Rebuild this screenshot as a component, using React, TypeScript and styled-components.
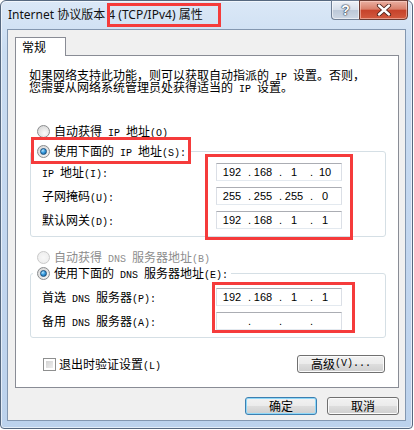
import React from 'react';
import styled, { createGlobalStyle } from 'styled-components';

const GlobalStyle = createGlobalStyle`
  html, body {
    margin: 0;
    padding: 0;
    background: #fff;
  }
  body {
    font-family: "Noto Sans CJK SC", "Noto Sans", sans-serif;
    font-size: 12px;
    color: #000;
  }
`;

const Window = styled.div`
  position: relative;
  box-sizing: border-box;
  width: 413px;
  height: 429px;
  display: flex;
  flex-direction: column;
  border: 1px solid #56687f;
  border-radius: 6px 6px 4px 4px;
  background: linear-gradient(180deg, #dbe8f7 0%, #c9dcf1 12%, #c2d6ef 60%, #bcd2ec 100%);
  box-shadow: inset 0 0 0 1px rgba(255, 255, 255, 0.6);
`;

const TitleBar = styled.div`
  height: 28px;
  display: flex;
  align-items: flex-start;
  padding-left: 7px;
`;

const Title = styled.div`
  font-family: "Noto Sans", "Noto Sans CJK SC", sans-serif;
  font-size: 12px;
  line-height: 28px;
  color: #111;
`;

const CaptionButtons = styled.div`
  display: flex;
  margin-left: auto;
  margin-right: 4px;
  margin-top: -1px;
`;

const HelpButton = styled.div`
  box-sizing: border-box;
  width: 28px;
  height: 20px;
  display: flex;
  align-items: center;
  justify-content: center;
  border: 1px solid #6f7f95;
  border-right: none;
  border-radius: 0 0 0 4px;
  background: linear-gradient(180deg, #eef2f8 0%, #d7dfea 48%, #bcc8d8 52%, #cdd7e4 100%);
  box-shadow: inset 0 0 0 1px rgba(255, 255, 255, 0.55);
  font-family: "Liberation Sans", sans-serif;
  font-weight: bold;
  font-size: 14px;
  color: #fff;
  text-shadow: 0 0 1px #2f3a48, 0 0 1px #2f3a48, 0 0 2px #2f3a48;
`;

const CloseButton = styled.div`
  box-sizing: border-box;
  width: 49px;
  height: 20px;
  display: flex;
  align-items: center;
  justify-content: center;
  border: 1px solid #6a3b33;
  border-radius: 0 0 4px 0;
  background: linear-gradient(180deg, #eab0a2 0%, #d9806b 45%, #c6432b 52%, #d25a3f 100%);
  box-shadow: inset 0 0 0 1px rgba(255, 220, 210, 0.5);
`;

const Client = styled.div`
  flex: 1;
  margin: 0 6px 7px 6px;
  box-sizing: border-box;
  border: 1px solid #8397b0;
  background: #f0f0f0;
  padding: 7px 6px 0 7px;
  display: flex;
  flex-direction: column;
  line-height: 16px;
`;

const Tab = styled.div`
  position: relative;
  z-index: 1;
  box-sizing: border-box;
  width: 51px;
  height: 19px;
  margin-bottom: -1px;
  padding-left: 6px;
  border: 1px solid #898c95;
  border-bottom: none;
  background: #fff;
  line-height: 18px;
`;

const Panel = styled.div`
  box-sizing: border-box;
  width: 384px;
  height: 333px;
  border: 1px solid #898c95;
  background: #fff;
  display: flex;
  flex-direction: column;
`;

const Description = styled.div`
  margin-top: 13px;
  padding-left: 13px;
  line-height: 12px;
`;

const Latin = styled.span`
  font-family: "Liberation Mono", monospace;
  font-size: 10px;
  line-height: 0;
`;

const RadioRow = styled.div<{ $disabled?: boolean }>`
  height: 16px;
  display: flex;
  align-items: center;
  gap: 4px;
  color: ${(p) => (p.$disabled ? '#8d8d8d' : '#000')};
`;

const StandaloneRadio = styled(RadioRow)<{ $top: number }>`
  margin-top: ${(p) => p.$top}px;
  padding-left: 21px;
`;

const RadioCircle = styled.span<{ $disabled?: boolean }>`
  box-sizing: border-box;
  width: 13px;
  height: 13px;
  border-radius: 50%;
  display: inline-flex;
  align-items: center;
  justify-content: center;
  border: 1px solid ${(p) => (p.$disabled ? '#c9c9c9' : '#8a8c8e')};
  background: ${(p) =>
    p.$disabled
      ? 'radial-gradient(circle at 50% 50%, #f7f7f7 0%, #ececec 100%)'
      : 'radial-gradient(circle at 60% 65%, #fbfbfb 0%, #e3e3e3 55%, #cfcfcf 100%)'};
`;

const RadioDot = styled.span`
  width: 5px;
  height: 5px;
  border-radius: 50%;
  border: 1px solid #1c4f7d;
  background: radial-gradient(circle at 35% 30%, #b6e4ff 0%, #3a9ee0 45%, #0d5a98 100%);
`;

const Group = styled.fieldset<{ $top: number; $padTop: number }>`
  box-sizing: border-box;
  width: 356px;
  margin: ${(p) => p.$top}px 0 0 14px;
  padding: ${(p) => p.$padTop}px 0 4px 0;
  border: 1px solid #d5dfe5;
  border-radius: 3px;
  min-width: 0;
`;

const Legend = styled.legend`
  margin-left: 2px;
  padding: 0 3px 0 4px;
  line-height: 16px;
`;

const FieldRow = styled.div`
  height: 24px;
  display: flex;
  align-items: center;
  padding-left: 11px;
`;

const FieldLabel = styled.div`
  width: 174px;
`;

const IpBox = styled.div`
  box-sizing: border-box;
  width: 126px;
  height: 18px;
  display: flex;
  align-items: center;
  padding-left: 3px;
  background: #fff;
  border: 1px solid #dbdfe6;
  border-top-color: #abadb3;
  border-bottom-color: #e3e9ef;
  font-family: "Liberation Sans", sans-serif;
  font-size: 11px;
`;

const Octet = styled.span`
  width: 24px;
  text-align: center;
`;

const Dot = styled.span`
  width: 7px;
  text-align: right;
`;

const BottomRow = styled.div`
  margin-top: 17px;
  height: 18px;
  display: flex;
  align-items: center;
  padding: 0 13px 0 27px;
`;

const CheckBox = styled.span`
  box-sizing: border-box;
  width: 13px;
  height: 13px;
  margin-right: 3px;
  border: 1px solid #8e8f8f;
  background: #f4f4f4;
  background-image: linear-gradient(135deg, #cbcbcb 0%, #f6f6f6 100%);
  background-clip: content-box;
  padding: 2px;
`;

const Button = styled.div<{ $default?: boolean; $width: number }>`
  box-sizing: border-box;
  width: ${(p) => p.$width}px;
  height: 18px;
  display: flex;
  align-items: center;
  justify-content: center;
  border: 1px solid ${(p) => (p.$default ? '#3c7fb1' : '#707070')};
  border-radius: 3px;
  background: linear-gradient(180deg, #f2f2f2 0%, #ebebeb 48%, #dddddd 52%, #cfcfcf 100%);
  box-shadow: inset 0 0 0 1px ${(p) => (p.$default ? '#8fd8f8' : '#fbfbfb')};
  line-height: 16px;
`;

const Spacer = styled.div`
  flex: 1;
`;

const DialogButtons = styled.div`
  width: 384px;
  margin-top: 9px;
  display: flex;
  justify-content: flex-end;
  gap: 10px;
`;

const Highlight = styled.div<{ $x: number; $y: number; $w: number; $h: number }>`
  position: absolute;
  left: ${(p) => p.$x}px;
  top: ${(p) => p.$y}px;
  width: ${(p) => p.$w}px;
  height: ${(p) => p.$h}px;
  box-sizing: border-box;
  border: 3px solid #f53b3b;
  pointer-events: none;
`;

function Txt({ children }: { children: string }) {
  const parts = children.split(/([\x20-\x7e]+)/);
  return (
    <>
      {parts.map((p, i) => (/[\x20-\x7e]/.test(p) ? <Latin key={i}>{p}</Latin> : p))}
    </>
  );
}

function Radio({ checked, disabled, label }: { checked?: boolean; disabled?: boolean; label: string }) {
  return (
    <>
      <RadioCircle $disabled={disabled}>{checked && <RadioDot />}</RadioCircle>
      <span>
        <Txt>{label}</Txt>
      </span>
    </>
  );
}

function IpField({ parts }: { parts: string[] }) {
  return (
    <IpBox>
      <Octet>{parts[0]}</Octet>
      <Dot>.</Dot>
      <Octet>{parts[1]}</Octet>
      <Dot>.</Dot>
      <Octet>{parts[2]}</Octet>
      <Dot>.</Dot>
      <Octet>{parts[3]}</Octet>
    </IpBox>
  );
}

const ipRows = [
  { label: 'IP 地址(I):', value: ['192', '168', '1', '10'] },
  { label: '子网掩码(U):', value: ['255', '255', '255', '0'] },
  { label: '默认网关(D):', value: ['192', '168', '1', '1'] },
];

const dnsRows = [
  { label: '首选 DNS 服务器(P):', value: ['192', '168', '1', '1'] },
  { label: '备用 DNS 服务器(A):', value: ['', '', '', ''] },
];

export default function App() {
  return (
    <>
      <GlobalStyle />
      <Window>
        <TitleBar>
          <Title>Internet 协议版本 4 (TCP/IPv4) 属性</Title>
          <CaptionButtons>
            <HelpButton>?</HelpButton>
            <CloseButton>
              <svg width="16" height="12" viewBox="0 0 16 12">
                <path d="M3 1.5 L13 10.5 M13 1.5 L3 10.5" stroke="#4b2018" strokeWidth="4.2" strokeLinecap="round" />
                <path d="M3 1.5 L13 10.5 M13 1.5 L3 10.5" stroke="#fff" strokeWidth="2.4" strokeLinecap="round" />
              </svg>
            </CloseButton>
          </CaptionButtons>
        </TitleBar>
        <Client>
          <Tab>常规</Tab>
          <Panel>
            <Description>
              <div>
                <Txt>如果网络支持此功能，则可以获取自动指派的 IP 设置。否则，</Txt>
              </div>
              <div>
                <Txt>您需要从网络系统管理员处获得适当的 IP 设置。</Txt>
              </div>
            </Description>
            <StandaloneRadio $top={30}>
              <Radio label="自动获得 IP 地址(O)" />
            </StandaloneRadio>
            <Group $top={4} $padTop={1}>
              <Legend>
                <RadioRow>
                  <Radio checked label="使用下面的 IP 地址(S):" />
                </RadioRow>
              </Legend>
              {ipRows.map((r) => (
                <FieldRow key={r.label}>
                  <FieldLabel>
                    <Txt>{r.label}</Txt>
                  </FieldLabel>
                  <IpField parts={r.value} />
                </FieldRow>
              ))}
            </Group>
            <StandaloneRadio $top={12} $disabled>
              <Radio disabled label="自动获得 DNS 服务器地址(B)" />
            </StandaloneRadio>
            <Group $top={0} $padTop={4}>
              <Legend>
                <RadioRow>
                  <Radio checked label="使用下面的 DNS 服务器地址(E):" />
                </RadioRow>
              </Legend>
              {dnsRows.map((r) => (
                <FieldRow key={r.label}>
                  <FieldLabel>
                    <Txt>{r.label}</Txt>
                  </FieldLabel>
                  <IpField parts={r.value} />
                </FieldRow>
              ))}
            </Group>
            <BottomRow>
              <CheckBox />
              <span>
                <Txt>退出时验证设置(L)</Txt>
              </span>
              <Spacer />
              <Button $width={88}>
                <Txt>高级(V)...</Txt>
              </Button>
            </BottomRow>
          </Panel>
          <DialogButtons>
            <Button $default $width={72}>确定</Button>
            <Button $width={72}>取消</Button>
          </DialogButtons>
        </Client>
        <Highlight $x={106} $y={2} $w={114} $h={24} />
        <Highlight $x={30} $y={136} $w={160} $h={27} />
        <Highlight $x={204} $y={153} $w={148} $h={86} />
        <Highlight $x={211} $y={281} $w={143} $h={51} />
      </Window>
    </>
  );
}
